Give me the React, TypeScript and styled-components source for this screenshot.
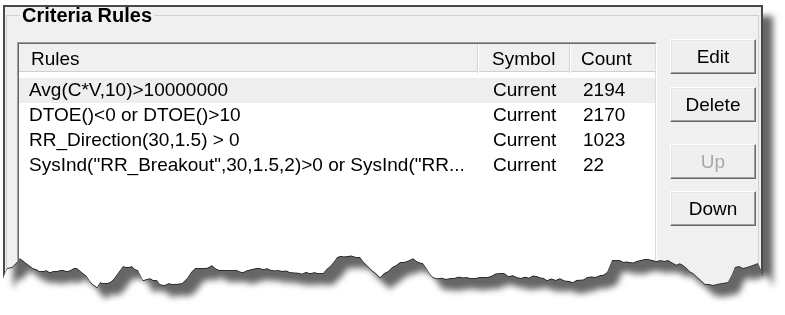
import styled, { createGlobalStyle } from 'styled-components';

const GlobalStyle = createGlobalStyle`
  html, body {
    margin: 0;
    background: #fff;
  }
  body {
    font-family: "Liberation Sans", Arial, sans-serif;
  }
`;

// torn bottom edge, page coordinates
const EDGE: [number, number][] = [
  [3, 277], [7, 268], [12, 267], [17, 262], [20, 258], [25, 262], [33, 268], [43, 271],
  [53, 271], [67, 271], [77, 268], [83, 273], [97, 287], [100, 282], [110, 282], [117, 274],
  [123, 266], [132, 266], [138, 270], [143, 280], [150, 278], [157, 280], [160, 284], [173, 284],
  [182, 283], [187, 278], [195, 268], [203, 268], [212, 265], [220, 270], [233, 270], [243, 272],
  [260, 268], [267, 268], [290, 272], [310, 273], [323, 273], [337, 257], [347, 256], [360, 257],
  [380, 277], [400, 262], [413, 258], [423, 263], [433, 277], [450, 278], [467, 277], [487, 277],
  [500, 273], [517, 277], [537, 276], [547, 280], [560, 278], [573, 282], [587, 277], [600, 275],
  [607, 272], [612, 260], [620, 260], [630, 262], [640, 260], [653, 260], [668, 260], [673, 263],
  [683, 265], [693, 273], [705, 284], [717, 284], [728, 282], [735, 267], [747, 267], [753, 265],
  [758, 263], [763, 275],
];

function jitter(x: number) {
  const f = Math.sin(x * 12.9898) * 43758.5453;
  const r = f - Math.floor(f);
  return r < 0.25 ? -1 : r > 0.75 ? 1 : 0;
}

function tornClip() {
  const pts: string[] = [];
  for (let i = 0; i < EDGE.length - 1; i++) {
    const [x1, y1] = EDGE[i];
    const [x2, y2] = EDGE[i + 1];
    const steps = Math.max(1, Math.round((x2 - x1) / 4));
    for (let s = 0; s < steps; s++) {
      const t = s / steps;
      const x = x1 + (x2 - x1) * t;
      const y = y1 + (y2 - y1) * t + (s === 0 ? 0 : jitter(x));
      pts.push(`${(x - 3).toFixed(1)}px ${(y - 5).toFixed(1)}px`);
    }
  }
  const last = EDGE[EDGE.length - 1];
  pts.push(`${last[0] - 3}px ${last[1] - 5}px`);
  return `polygon(0 0, 760px 0, ${pts.reverse().join(', ')})`;
}

const Stage = styled.div`
  width: 785px;
  height: 315px;
  padding: 5px 0 0 3px;
  box-sizing: border-box;
  overflow: hidden;
`;

const Shadow = styled.div`
  width: 760px;
  filter: drop-shadow(0 1.5px 0 #2f2f2f) drop-shadow(10px 11px 3px rgba(0, 0, 0, 0.6));
`;

const Paper = styled.div<{ $clip: string }>`
  box-sizing: border-box;
  width: 760px;
  height: 284px;
  background: #f0f0f0;
  border: 2px solid #484848;
  border-bottom: none;
  clip-path: ${(p) => p.$clip};
`;

const Group = styled.fieldset`
  margin: 0 2px 0 1px;
  padding: 16px 2px 0 10px;
  border: 1px solid #d0d0d0;
  height: 310px;
  min-width: 0;
  box-sizing: border-box;
`;

const Legend = styled.legend`
  margin-left: 3px;
  padding: 0 2px;
  font-size: 20px;
  font-weight: bold;
  line-height: 16px;
  color: #000;
`;

const Content = styled.div`
  display: flex;
  align-items: flex-start;
  gap: 13px;
`;

const ListView = styled.div`
  margin-top: 3px;
  width: 640px;
  height: 270px;
  box-sizing: border-box;
  border: 1px solid;
  border-color: #a0a0a0 #fff #fff #a0a0a0;
`;

const ListInner = styled.div`
  height: 100%;
  box-sizing: border-box;
  border: 1px solid;
  border-color: #696969 #dcdcdc #dcdcdc #696969;
  background: #fff;
`;

const HeaderRow = styled.div`
  display: grid;
  grid-template-columns: 459px 92px 85px;
  height: 27px;
  background: #f0f0f0;
  border-bottom: 1px solid #d0d0d0;
`;

const HeadCell = styled.div<{ $pad: number; $sep?: boolean }>`
  padding-left: ${(p) => p.$pad}px;
  font-size: 19px;
  line-height: 29px;
  color: #000;
  border-right: 1px solid ${(p) => (p.$sep ? '#d4d4d4' : 'transparent')};
  box-shadow: ${(p) => (p.$sep ? '1px 0 0 #fff' : 'none')};
`;

const Body = styled.div`
  padding-top: 6px;
`;

const Row = styled.div<{ $selected?: boolean }>`
  display: grid;
  grid-template-columns: 459px 92px 85px;
  height: 25px;
  background: ${(p) => (p.$selected ? '#eeeeee' : 'transparent')};
`;

const Cell = styled.div<{ $pad: number }>`
  padding-left: ${(p) => p.$pad}px;
  font-size: 19px;
  line-height: 24px;
  color: #000;
  white-space: nowrap;
  overflow: hidden;
`;

const ButtonColumn = styled.div`
  display: flex;
  flex-direction: column;
  width: 86px;
`;

const Button = styled.button<{ $space: number }>`
  margin-top: ${(p) => p.$space}px;
  width: 86px;
  height: 35px;
  padding: 0;
  font-family: "Liberation Sans", Arial, sans-serif;
  font-size: 19px;
  color: #000;
  background: #efefef;
  border: 1px solid;
  border-color: #fff #696969 #696969 #fff;
  box-shadow: inset -1px -1px 0 #a0a0a0, inset 1px 1px 0 #e6e6e6;

  &:disabled {
    color: #a8a8a8;
  }
`;

const rules = [
  { rule: 'Avg(C*V,10)>10000000', symbol: 'Current', count: 2194 },
  { rule: 'DTOE()<0 or DTOE()>10', symbol: 'Current', count: 2170 },
  { rule: 'RR_Direction(30,1.5) > 0', symbol: 'Current', count: 1023 },
  { rule: 'SysInd("RR_Breakout",30,1.5,2)>0 or SysInd("RR...', symbol: 'Current', count: 22 },
];

function App() {
  return (
    <>
      <GlobalStyle />
      <Stage>
        <Shadow>
          <Paper $clip={tornClip()}>
            <Group>
              <Legend>Criteria Rules</Legend>
              <Content>
                <ListView>
                  <ListInner>
                    <HeaderRow>
                      <HeadCell $pad={12} $sep>Rules</HeadCell>
                      <HeadCell $pad={14} $sep>Symbol</HeadCell>
                      <HeadCell $pad={11}>Count</HeadCell>
                    </HeaderRow>
                    <Body>
                      {rules.map((r, i) => (
                        <Row key={i} $selected={i === 0}>
                          <Cell $pad={10}>{r.rule}</Cell>
                          <Cell $pad={15}>{r.symbol}</Cell>
                          <Cell $pad={13}>{r.count}</Cell>
                        </Row>
                      ))}
                    </Body>
                  </ListInner>
                </ListView>
                <ButtonColumn>
                  <Button $space={0}>Edit</Button>
                  <Button $space={13}>Delete</Button>
                  <Button $space={22} disabled>Up</Button>
                  <Button $space={12}>Down</Button>
                </ButtonColumn>
              </Content>
            </Group>
          </Paper>
        </Shadow>
      </Stage>
    </>
  );
}

export default App;
